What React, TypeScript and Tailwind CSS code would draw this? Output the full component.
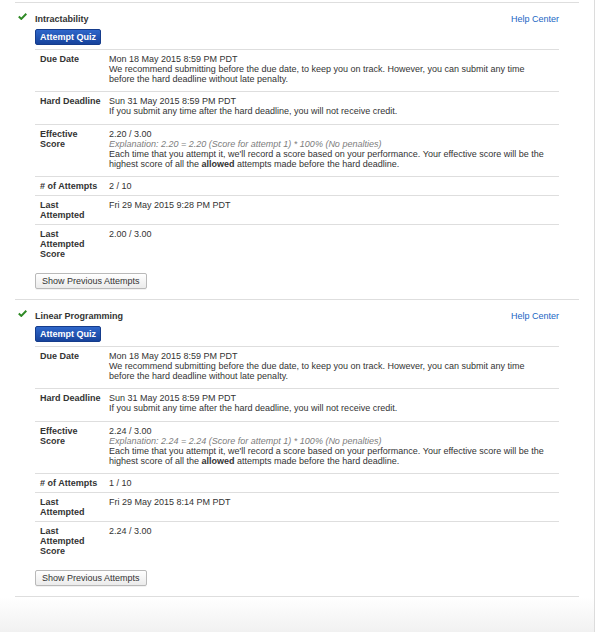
import React from "react";

type Row = { label: React.ReactNode; value: React.ReactNode; pb: string };

function Check() {
  return (
    <svg width="9" height="7" viewBox="0 0 9 7" className="mt-[10px] ml-[3px]">
      <path d="M0.8 3.6 L3.3 5.9 L8.3 0.8" fill="none" stroke="#2f8a25" strokeWidth="2" strokeLinejoin="miter" />
    </svg>
  );
}

function Section({
  title,
  effective,
  explanation,
  attempts,
  last,
  lastScore,
}: {
  title: string;
  effective: string;
  explanation: string;
  attempts: string;
  last: string;
  lastScore: string;
}) {
  const rows: Row[] = [
    {
      label: "Due Date",
      pb: "pb-[7px]",
      value: (
        <>
          Mon 18 May 2015 8:59 PM PDT
          <br />
          We recommend submitting before the due date, to keep you on track. However, you can submit any time
          <br />
          before the hard deadline without late penalty.
        </>
      ),
    },
    {
      label: "Hard Deadline",
      pb: "pb-[8px]",
      value: (
        <>
          Sun 31 May 2015 8:59 PM PDT
          <br />
          If you submit any time after the hard deadline, you will not receive credit.
        </>
      ),
    },
    {
      label: (
        <>
          Effective
          <br />
          Score
        </>
      ),
      pb: "pb-[7px]",
      value: (
        <>
          {effective}
          <br />
          <span className="italic text-[#7d7d7d]">{explanation}</span>
          <br />
          Each time that you attempt it, we'll record a score based on your performance. Your effective score will be the
          <br />
          highest score of all the <b>allowed</b> attempts made before the hard deadline.
        </>
      ),
    },
    { label: "# of Attempts", value: attempts, pb: "pb-[4px]" },
    {
      label: (
        <>
          Last
          <br />
          Attempted
        </>
      ),
      value: last,
      pb: "pb-[4px]",
    },
    {
      label: (
        <>
          Last
          <br />
          Attempted
          <br />
          Score
        </>
      ),
      value: lastScore,
      pb: "pb-[4px]",
    },
  ];
  return (
    <div className="flex border-t border-[#dedede] pb-[10px]">
      <div className="w-[20px] shrink-0">
        <Check />
      </div>
      <div className="flex-1 pr-[20px]">
        <div className="flex justify-between pt-[11px] leading-[10px]">
          <span className="font-bold text-[#333]">{title}</span>
          <span className="text-[#2166c4]">Help Center</span>
        </div>
        <div className="mt-[5px] flex">
          <button className="h-[16px] rounded-[2px] border border-[#153c8c] bg-gradient-to-b from-[#2f67ca] to-[#17439c] px-[4px] text-[9px] font-bold leading-[10px] text-white">
            Attempt Quiz
          </button>
        </div>
        <div className="mt-[4px]">
          {rows.map((r, i) => (
            <div key={i} className={"flex border-t border-[#dedede] pt-[4px] " + r.pb}>
              <div className="w-[74px] shrink-0 whitespace-nowrap pl-[5px] font-bold">{r.label}</div>
              <div className="whitespace-nowrap">{r.value}</div>
            </div>
          ))}
        </div>
        <div className="mt-[10px] flex">
          <button className="h-[16px] rounded-[2px] border border-[#b9b9b9] bg-gradient-to-b from-white to-[#ebebeb] px-[6px] text-[9px] leading-[10px] text-[#333] shadow-[0_1px_0_rgba(0,0,0,0.05)]">
            Show Previous Attempts
          </button>
        </div>
      </div>
    </div>
  );
}

export default function App() {
  return (
    <div
      className="w-[597px] h-[632px] bg-white text-[9px] leading-[10px] text-[#333]"
      style={{ fontFamily: '"Liberation Sans", Arial, sans-serif' }}
    >
      <div className="flex h-full w-[595px] flex-col border-r border-[#dcdcdc]">
        <div className="px-[15px] pt-[2px]">
          <Section
            title="Intractability"
            effective="2.20 / 3.00"
            explanation="Explanation: 2.20 = 2.20 (Score for attempt 1) * 100% (No penalties)"
            attempts="2 / 10"
            last="Fri 29 May 2015 9:28 PM PDT"
            lastScore="2.00 / 3.00"
          />
          <Section
            title="Linear Programming"
            effective="2.24 / 3.00"
            explanation="Explanation: 2.24 = 2.24 (Score for attempt 1) * 100% (No penalties)"
            attempts="1 / 10"
            last="Fri 29 May 2015 8:14 PM PDT"
            lastScore="2.24 / 3.00"
          />
          <div className="border-t border-[#dedede]" />
        </div>
        <div className="flex-1 bg-gradient-to-b from-white to-[#f1f1f1]" />
      </div>
    </div>
  );
}
